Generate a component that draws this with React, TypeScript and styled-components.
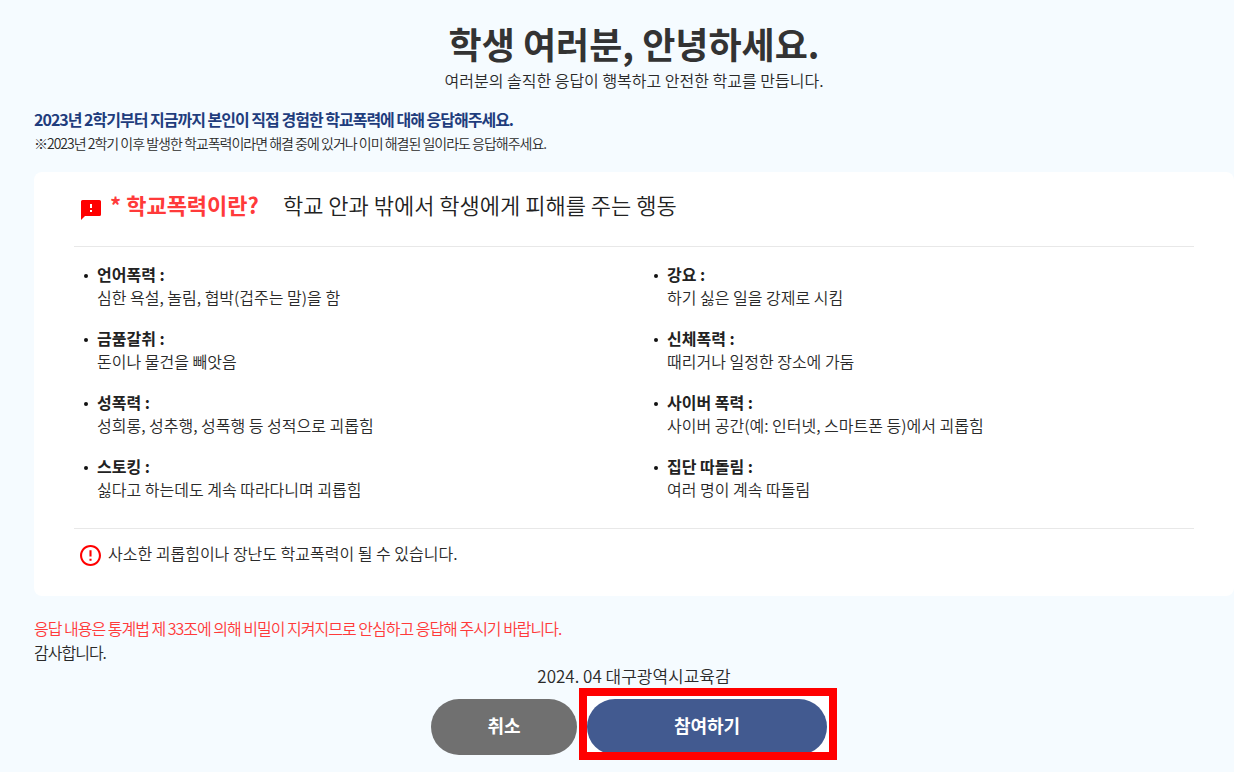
import React from 'react';
import styled, { createGlobalStyle } from 'styled-components';

const Global = createGlobalStyle`
  * { box-sizing: border-box; }
  body {
    margin: 0;
    background: #f5fbff;
    color: #2a2a2a;
    font-family: "Noto Sans CJK KR", "Noto Sans", sans-serif;
    font-weight: 350;
    overflow-x: hidden;
  }
  h1, h2, p, ul { margin: 0; padding: 0; }
`;

const Page = styled.main`
  padding: 17px 0 12px 34px;
`;

const Header = styled.header`
  text-align: center;
`;

const Title = styled.h1`
  color: #333;
  font-size: 36px;
  font-weight: 700;
  line-height: 52px;
`;

const Subtitle = styled.p`
  font-size: 16px;
  line-height: 22px;
`;

const Notice = styled.section`
  margin-top: 16px;
  letter-spacing: -1px;
`;

const NoticeLead = styled.p`
  color: #1f3d7d;
  font-size: 16px;
  font-weight: 700;
  line-height: 24px;
`;

const NoticeNote = styled.p`
  font-size: 14px;
  line-height: 24px;
`;

const Card = styled.section`
  margin-top: 17px;
  padding: 12px 40px 28px;
  border-radius: 8px;
  background: #fff;
`;

const CardHeader = styled.div`
  display: flex;
  align-items: center;
  height: 63px;
  padding: 0 0 22px 7px;
  border-bottom: 1px solid #e8e8e8;

  svg { margin-top: 12px; }
`;

const CardTitle = styled.h2`
  margin-left: 9px;
  color: #ff3a3a;
  font-size: 22px;
  font-weight: 700;
  line-height: 30px;
`;

const CardSummary = styled.p`
  margin-left: 24px;
  color: #222;
  font-size: 22px;
  line-height: 30px;
`;

const TypeGrid = styled.ul`
  display: grid;
  grid-template-columns: 1fr 1fr;
  gap: 18px 20px;
  padding: 16px 0 27px;
  list-style: none;
`;

const TypeItem = styled.li`
  position: relative;
  padding-left: 23px;
  font-size: 16px;
  line-height: 23px;

  &::before {
    content: "";
    position: absolute;
    left: 10px;
    top: 11px;
    width: 4px;
    height: 4px;
    border-radius: 50%;
    background: #111;
  }
`;

const TypeName = styled.strong`
  display: block;
  color: #222;
  font-weight: 700;
`;

const CardFooter = styled.div`
  display: flex;
  align-items: flex-start;
  gap: 7px;
  padding: 12px 0 2px 6px;
  border-top: 1px solid #e8e8e8;
  font-size: 16px;
  line-height: 25px;

  svg { margin-top: 4px; }
`;

const Closing = styled.section`
  margin-top: 20px;
  font-size: 16px;
  line-height: 24px;
  letter-spacing: -1px;
`;

const Privacy = styled.p`
  color: #ff3a3a;
`;

const Signature = styled.p`
  font-size: 17px;
  line-height: 24px;
  text-align: center;
`;

const Actions = styled.div`
  display: flex;
  justify-content: center;
  gap: 10px;
  margin-top: 11px;
  padding-right: 10px;
`;

const Button = styled.button<{ $primary?: boolean }>`
  display: block;
  width: ${p => (p.$primary ? 240 : 146)}px;
  height: 56px;
  padding: 0 0 4px;
  border: 0;
  border-radius: 28px;
  background: ${p => (p.$primary ? '#425a90' : '#707070')};
  color: #fff;
  font: 700 18px "Noto Sans CJK KR", sans-serif;
  cursor: pointer;
`;

const Highlight = styled.div`
  position: relative;
  isolation: isolate;

  &::before,
  &::after {
    content: "";
    position: absolute;
    inset: -11px -10px -5px -8px;
    pointer-events: none;
  }

  &::before {
    z-index: -1;
    background: #fff;
  }

  &::after {
    border: 8px solid #f00;
  }
`;

const types = [
  ['언어폭력 :', '심한 욕설, 놀림, 협박(겁주는 말)을 함'],
  ['강요 :', '하기 싫은 일을 강제로 시킴'],
  ['금품갈취 :', '돈이나 물건을 빼앗음'],
  ['신체폭력 :', '때리거나 일정한 장소에 가둠'],
  ['성폭력 :', '성희롱, 성추행, 성폭행 등 성적으로 괴롭힘'],
  ['사이버 폭력 :', '사이버 공간(예: 인터넷, 스마트폰 등)에서 괴롭힘'],
  ['스토킹 :', '싫다고 하는데도 계속 따라다니며 괴롭힘'],
  ['집단 따돌림 :', '여러 명이 계속 따돌림'],
];

const SpeechIcon = () => (
  <svg width="20" height="20" viewBox="0 0 20 20" fill="#f00" aria-hidden="true">
    <path fillRule="evenodd" d="M1.500 0h17Q20 0 20 1.500v13Q20 16 18.500 16H4L0 20V1.500Q0 0 1.500 0zM9 4v4h2V4zM9 10v2h2v-2z" />
  </svg>
);

const AlertIcon = () => (
  <svg width="21" height="21" viewBox="2 2 20 20" fill="#f00" aria-hidden="true">
    <path d="M11 15h2v2h-2zm0-8h2v6h-2zm.99-5C6.47 2 2 6.48 2 12s4.47 10 9.99 10C17.52 22 22 17.52 22 12S17.52 2 11.99 2zM12 20c-4.42 0-8-3.58-8-8s3.58-8 8-8 8 3.58 8 8-3.58 8-8 8z" />
  </svg>
);

export default function App() {
  return (
    <>
      <Global />
      <Page>
        <Header>
          <Title>학생 여러분, 안녕하세요.</Title>
          <Subtitle>여러분의 솔직한 응답이 행복하고 안전한 학교를 만듭니다.</Subtitle>
        </Header>
        <Notice>
          <NoticeLead>2023년 2학기부터 지금까지 본인이 직접 경험한 학교폭력에 대해 응답해주세요.</NoticeLead>
          <NoticeNote>※2023년 2학기 이후 발생한 학교폭력이라면 해결 중에 있거나 이미 해결된 일이라도 응답해주세요.</NoticeNote>
        </Notice>
        <Card>
          <CardHeader>
            <SpeechIcon />
            <CardTitle>* 학교폭력이란?</CardTitle>
            <CardSummary>학교 안과 밖에서 학생에게 피해를 주는 행동</CardSummary>
          </CardHeader>
          <TypeGrid>
            {types.map(([name, text]) => (
              <TypeItem key={name}>
                <TypeName>{name}</TypeName>
                {text}
              </TypeItem>
            ))}
          </TypeGrid>
          <CardFooter>
            <AlertIcon />
            <p>사소한 괴롭힘이나 장난도 학교폭력이 될 수 있습니다.</p>
          </CardFooter>
        </Card>
        <Closing>
          <Privacy>응답 내용은 통계법 제 33조에 의해 비밀이 지켜지므로 안심하고 응답해 주시기 바랍니다.</Privacy>
          <p>감사합니다.</p>
        </Closing>
        <Signature>2024. 04 대구광역시교육감</Signature>
        <Actions>
          <Button type="button">취소</Button>
          <Highlight>
            <Button type="button" $primary>참여하기</Button>
          </Highlight>
        </Actions>
      </Page>
    </>
  );
}
